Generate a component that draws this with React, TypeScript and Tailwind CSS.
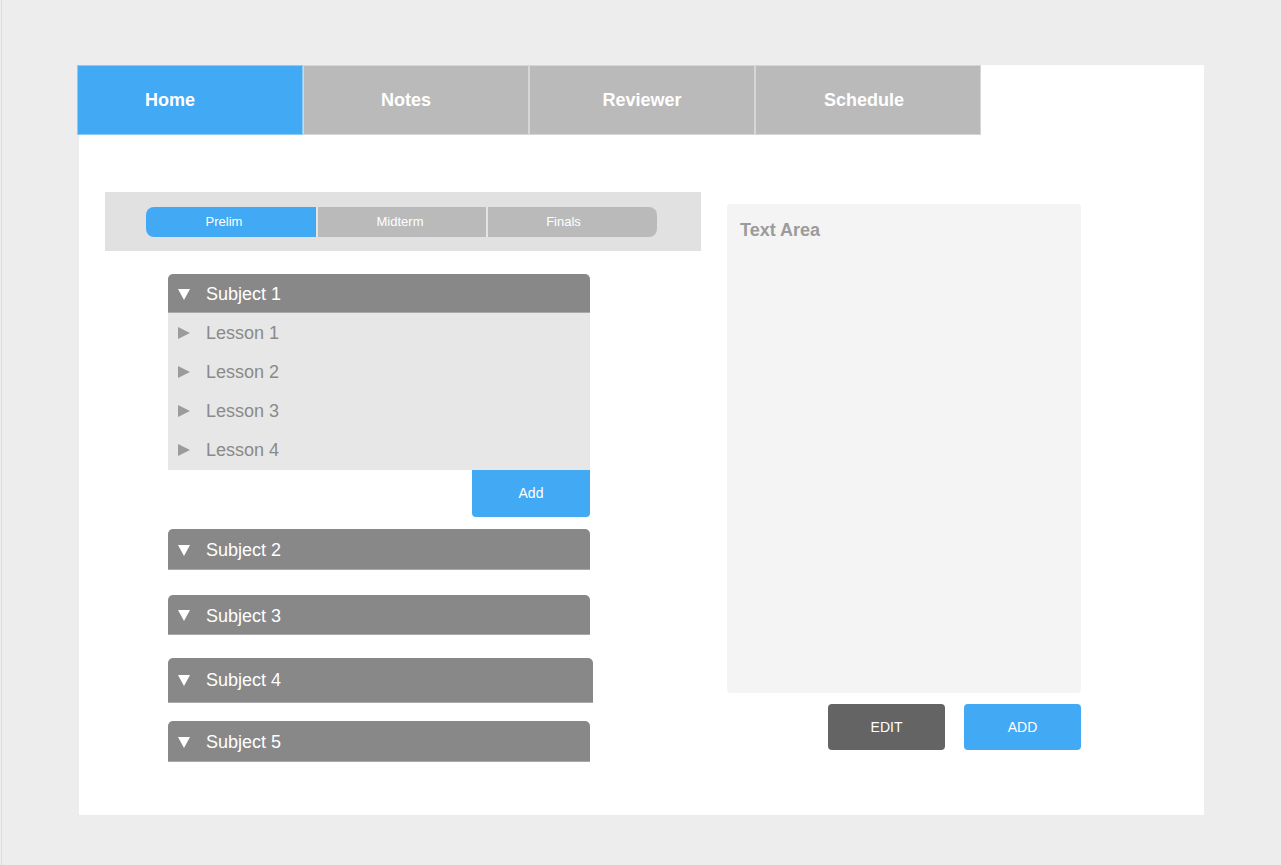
import React from 'react';

const font = { fontFamily: '"Liberation Sans", Arial, sans-serif' };

function DownTri({ color = '#ffffff' }: { color?: string }) {
  return (
    <svg width="12" height="11" viewBox="0 0 12 11" className="shrink-0">
      <polygon points="0,0 12,0 6,11" fill={color} />
    </svg>
  );
}

function RightTri() {
  return (
    <svg width="12" height="12" viewBox="0 0 12 12" className="shrink-0">
      <polygon points="0,0 12,6 0,12" fill="#9b9b9b" />
    </svg>
  );
}

function SubjectHeader({ label, className = '' }: { label: string; className?: string }) {
  return (
    <div
      className={`flex items-center bg-[#888888] rounded-t-[5px] border-b border-[#a8a8a8] pl-[10px] ${className}`}
    >
      <DownTri />
      <span className="ml-[16px] text-[18px] text-white leading-none">{label}</span>
    </div>
  );
}

export default function App() {
  const tabs = [
    { name: 'Home', active: true, pad: 'pr-[40px]' },
    { name: 'Notes', active: false, pad: 'pr-[20px]' },
    { name: 'Reviewer', active: false, pad: 'pr-0' },
    { name: 'Schedule', active: false, pad: 'pr-[8px]' },
  ];
  const terms = [
    { name: 'Prelim', pad: 'w-[170px] pr-[14px]' },
    { name: 'Midterm', pad: 'w-[170px] pr-[4px]' },
    { name: 'Finals', pad: 'w-[171px] pr-[18px]' },
  ];
  const lessons = ['Lesson 1', 'Lesson 2', 'Lesson 3', 'Lesson 4'];

  return (
    <div className="min-h-screen w-full bg-[#ededed]" style={font}>
      <div className="ml-px min-h-[865px] border-l border-[#dcdcdc] pt-[65px] pl-[75px]">
        <div className="ml-[2px] w-[1125px] h-[750px] bg-white">
          {/* Top tabs */}
          <div className="-ml-[2px] flex h-[70px]">
            {tabs.map((t) => (
              <div
                key={t.name}
                className={`w-[226px] h-full flex items-center justify-center border text-[18px] font-bold text-white ${t.pad} ${
                  t.active ? 'bg-[#42a9f5] border-[#8ccaf8]' : 'bg-[#bababa] border-[#d6d6d6]'
                }`}
              >
                {t.name}
              </div>
            ))}
          </div>

          <div className="flex pt-[57px]">
            {/* Left column */}
            <div className="ml-[26px] w-[596px]">
              <div className="h-[59px] bg-[#e1e1e1] flex items-center pl-[41px]">
                <div className="flex h-[30px] w-[511px] rounded-[8px] overflow-hidden">
                  {terms.map((t, i) => (
                    <div
                      key={t.name}
                      className={`shrink-0 flex items-center justify-center text-[13px] text-white ${t.pad} ${
                        i === 0 ? 'bg-[#42a9f5]' : 'bg-[#bababa] border-l-2 border-[#e4e4e4]'
                      }`}
                    >
                      {t.name}
                    </div>
                  ))}
                </div>
              </div>

              <div className="ml-[63px] w-[422px] mt-[23px]">
                <SubjectHeader label="Subject 1" className="h-[39px] pt-[2px]" />
                <div className="bg-[#e7e7e7] h-[157px]">
                  {lessons.map((l) => (
                    <div key={l} className="h-[39px] flex items-center pl-[10px]">
                      <RightTri />
                      <span className="ml-[16px] text-[18px] text-[#8a8a8a] leading-none">{l}</span>
                    </div>
                  ))}
                </div>
                <div className="flex justify-end">
                  <button className="w-[118px] h-[47px] bg-[#42a9f5] text-white text-[14px] rounded-b-[4px]">
                    Add
                  </button>
                </div>

                <SubjectHeader label="Subject 2" className="h-[41px] mt-[12px] pt-[2px]" />
                <SubjectHeader label="Subject 3" className="h-[40px] mt-[25px] pt-[2px]" />
                <SubjectHeader label="Subject 4" className="h-[45px] mt-[23px] w-[425px]" />
                <SubjectHeader label="Subject 5" className="h-[41px] mt-[18px] pt-[2px]" />
              </div>
            </div>

            {/* Right column */}
            <div className="ml-[26px] mt-[12px] w-[354px]">
              <div className="h-[489px] bg-[#f4f4f4] rounded-[4px] pt-[13px] pl-[13px]">
                <span className="text-[18px] font-bold text-[#9b9b9b]">Text Area</span>
              </div>
              <div className="flex justify-end gap-[19px] mt-[11px]">
                <button className="w-[117px] h-[46px] bg-[#646464] text-white text-[14px] rounded-[4px]">
                  EDIT
                </button>
                <button className="w-[117px] h-[46px] bg-[#42a9f5] text-white text-[14px] rounded-[4px]">
                  ADD
                </button>
              </div>
            </div>
          </div>
        </div>
      </div>
    </div>
  );
}
